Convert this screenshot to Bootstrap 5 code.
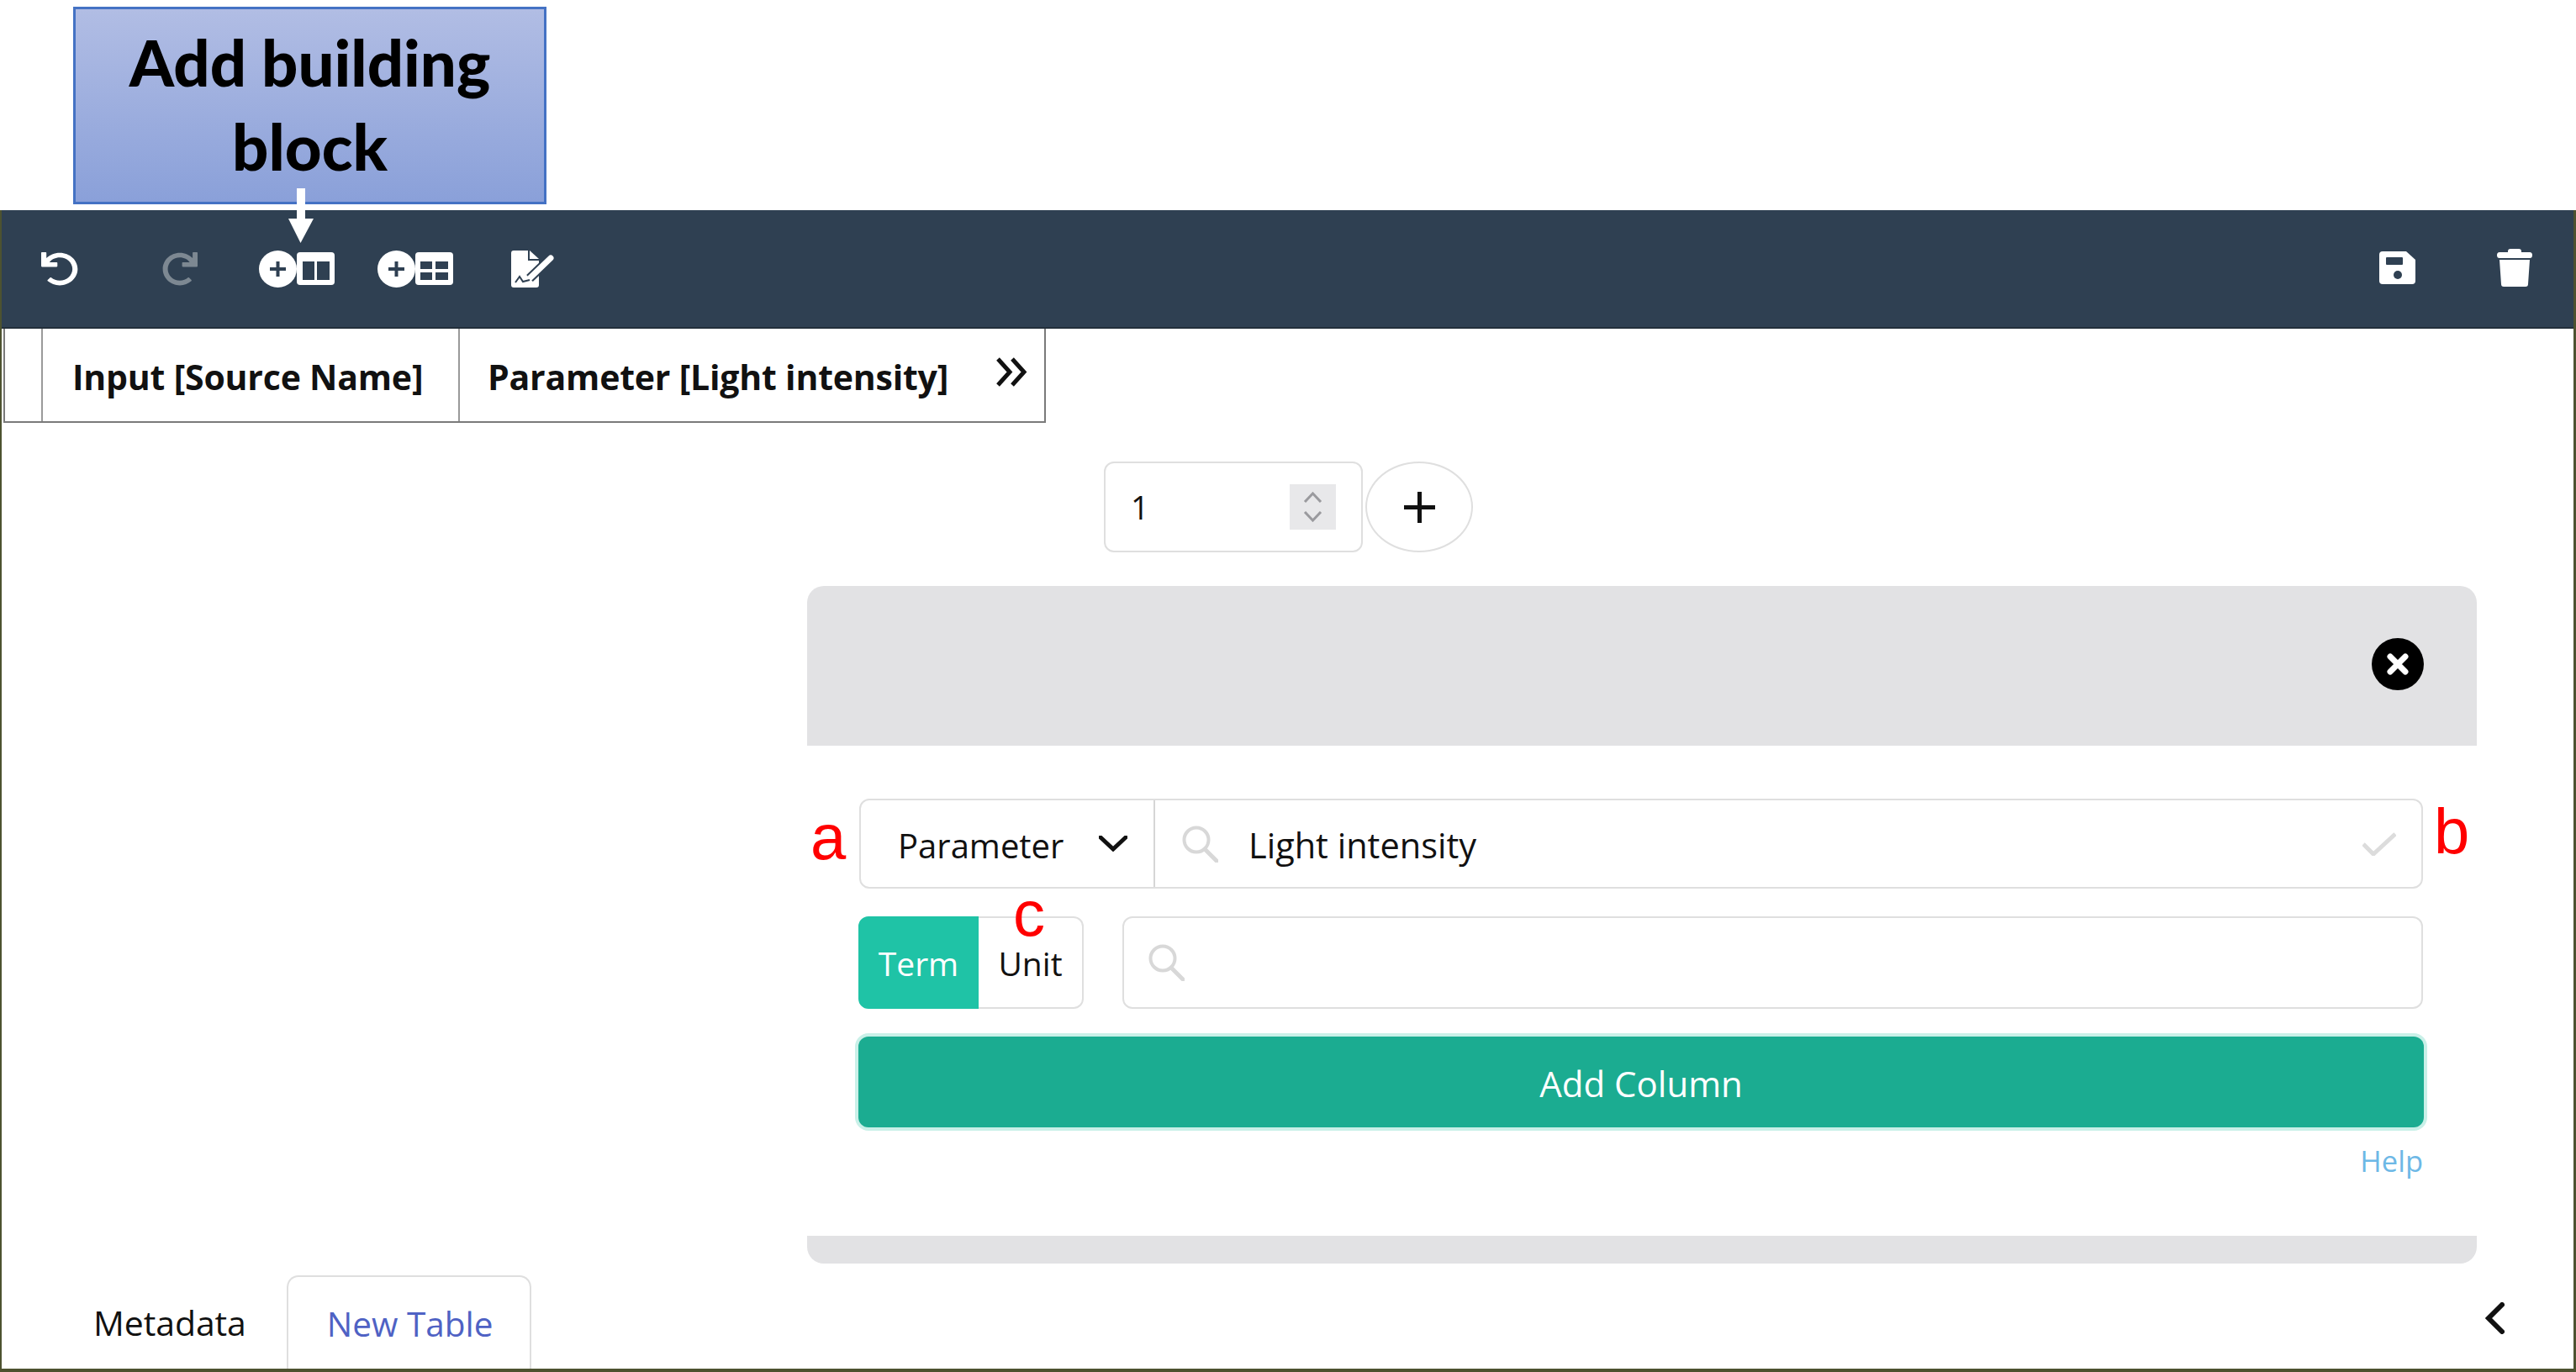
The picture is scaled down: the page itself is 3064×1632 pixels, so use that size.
<!DOCTYPE html>
<html lang="en">
<head>
<meta charset="utf-8">
<title>Building block</title>
<link href="https://cdn.jsdelivr.net/npm/bootstrap@5.3.0/dist/css/bootstrap.min.css" rel="stylesheet">
<style>
html,body{margin:0;background:#fff}
body{width:3064px;height:1632px;overflow:hidden;font-family:"Open Sans","Noto Sans",sans-serif;position:relative;color:#222}
.top-zone{height:250px;padding:8px 0 0 87px}
.callout{width:563px;height:235px;border:3px solid #4472c4;background:linear-gradient(#b1bde4,#8aa0d9);color:#000;font-family:Lato,sans-serif;font-weight:900;font-size:76px;line-height:100px;text-align:center;padding-top:13px}
.down-arrow{position:absolute;left:343px;top:224px;z-index:5}
.app-frame{height:1382px;border-left:2px solid #4d5230;border-right:3px solid #4d5230;border-bottom:4px solid #4d5230;display:flex;flex-direction:column}
.tool-bar{height:141px;background:#2f4052;border-bottom:2px solid #232f3b;padding:0;flex:none;position:relative;display:block}
.tool-bar svg{position:absolute;display:block}
.grid-head{display:flex;align-items:center;height:112px;width:1240px;margin-left:2px;border:2px solid #7a7a7a;border-top:0;flex:none;font-weight:700;font-size:41px;letter-spacing:-.2px;color:#111}
.grid-head>div{height:100%;display:flex;align-items:center;border-right:2px solid #9a9a9a;white-space:nowrap;padding-top:6px}
.cell-idx{width:45px}
.cell-a{width:496px;padding-left:35px}
.cell-b{flex:1;padding-left:33px;border-right:0!important;position:relative}
.cell-b svg{position:absolute;right:20px;top:34px}
.stepper-row{margin:46px 0 0 1311px;height:108px;flex:none;display:flex;gap:3px}
.step-box{width:308px;border:2px solid #dfdfdf;border-radius:12px;display:flex;align-items:center;padding:0 30px 0 30px}
.step-box input{border:0;outline:0;font-size:38px;width:100%;padding:0;background:none;color:#111;box-shadow:none}
.spin{width:55px;height:54px;flex:none;background:#e8e8ea;display:flex;flex-direction:column;align-items:center;justify-content:center;gap:10px}
.step-plus{width:128px;border:2px solid #dfdfdf;border-radius:50%;background:#fff;padding:0;display:flex;align-items:center;justify-content:center}
.bb-panel{margin:40px 0 0 958px;width:1986px;flex:none;position:relative}
.bb-head{height:190px;background:#e2e2e4;border-radius:20px 20px 0 0;display:flex;align-items:center;justify-content:flex-end;padding:0 63px 4px 0;margin-bottom:0}
.bb-foot{height:33px;background:#e2e2e4;border-radius:0 0 20px 20px}
.bb-body{height:583px;padding:63px 64px 0 62px;position:relative;background:#fff}
.field-line{height:107px;border:2px solid #dfdfdf;border-radius:12px;display:flex;align-items:center;font-size:40px;color:#111}
.type-pick{width:350px;height:100%;border-right:2px solid #d6d6d6;display:flex;align-items:center;padding-left:44px;justify-content:space-between;padding-right:31px}
.type-pick span{padding-top:4px}
.field-input{border:0;outline:0;background:none;flex:1;font-size:41.500px;color:#111;padding:4px 0 0;min-width:0}
.s-ico{flex:none;margin-left:32px;margin-right:36px}
.row-two .s-ico{margin-left:29px}
.ok-mark{margin-right:30px;flex:none}
.row-two{display:flex;margin-top:33px;gap:46px;height:110px}
.tog{display:flex;width:268px;height:110px;flex:none;margin-left:-1px}
.tog .btn{font-size:39px;padding:0;border-radius:12px;border:2px solid #dfdfdf;line-height:1;color:#111;background:#fff}
.tog .btn.tog-on{background:#1fc3a6;border-color:#1fc3a6;color:#fff;width:143px;border-radius:12px 0 0 12px}
.tog .btn.tog-off{flex:1;border-left:0;border-radius:0 12px 12px 0}
.row-two .field-line{flex:1;height:110px}
.add-btn{display:block;width:1862px;height:108px;margin:33px 0 0 -1px;background:#1bac91;border:0;color:#fff;font-size:42px;border-radius:12px;box-shadow:0 0 0 4px #c9f0e8;padding:2px 0 0}
.add-btn:hover,.add-btn:focus{background:#1bac91;color:#fff}
.help-link{display:block;text-align:right;color:#6db8e6;font-size:34.500px;line-height:1;margin-top:23px;text-decoration:none}
.mark-red{position:absolute;font-family:"Liberation Sans",sans-serif;font-size:76px;line-height:1;color:#f00}
.mark-a{left:4px;top:71px}
.mark-b{left:1935px;top:64px}
.mark-c{left:245px;top:162px}
.tab-strip{margin-top:auto;height:111px;display:flex;align-items:stretch;flex:none}
.tab-item{font-size:40.500px;padding:3px 46px 0;display:flex;align-items:center;color:#111;text-decoration:none}
.tab-first{margin-left:63px;padding-right:48px;font-size:41px;letter-spacing:-.1px}
.tab-on{border:2px solid #dfdfdf;border-bottom:0;border-radius:14px 14px 0 0;color:#4f62c4;background:#fff;padding-right:44px}
.tab-back{margin-left:auto;margin-right:82px;align-self:center;display:flex;margin-top:-10px}
</style>
</head>
<body>
<div class="top-zone">
  <div class="callout">Add building<br>block</div>
</div>
<svg class="down-arrow" width="30" height="65" viewBox="0 0 30 65"><rect x="10" y="0" width="10" height="37" fill="#fff"/><polygon points="0,36 30,36 14.5,65" fill="#fff"/></svg>
<div class="app-frame">
  <nav class="navbar tool-bar">
    <svg style="left:47px;top:50px" width="44" height="40" viewBox="0 0 512 512" preserveAspectRatio="none"><path fill="#fff" d="M212.333 224.333H12c-6.627 0-12-5.373-12-12V12C0 5.373 5.373 0 12 0h48c6.627 0 12 5.373 12 12v78.112C117.773 39.279 184.26 7.47 258.175 8.007c136.906.994 246.448 111.623 246.157 248.532C504.041 393.258 393.12 504 256.333 504c-64.089 0-122.496-24.313-166.51-64.215-5.099-4.622-5.334-12.554-.467-17.42l33.967-33.967c4.474-4.474 11.662-4.717 16.401-.525C170.76 415.336 211.58 432 256.333 432c97.268 0 176-78.716 176-176 0-97.267-78.716-176-176-176-58.496 0-110.28 28.476-142.274 72.333h98.274c6.627 0 12 5.373 12 12v48c0 6.627-5.373 12-12 12z"/></svg>
    <svg style="left:191px;top:50px" width="42" height="40" viewBox="0 0 512 512" preserveAspectRatio="none"><g transform="translate(512 0) scale(-1 1)"><path fill="#7d8892" d="M212.333 224.333H12c-6.627 0-12-5.373-12-12V12C0 5.373 5.373 0 12 0h48c6.627 0 12 5.373 12 12v78.112C117.773 39.279 184.26 7.47 258.175 8.007c136.906.994 246.448 111.623 246.157 248.532C504.041 393.258 393.12 504 256.333 504c-64.089 0-122.496-24.313-166.51-64.215-5.099-4.622-5.334-12.554-.467-17.42l33.967-33.967c4.474-4.474 11.662-4.717 16.401-.525C170.76 415.336 211.58 432 256.333 432c97.268 0 176-78.716 176-176 0-97.267-78.716-176-176-176-58.496 0-110.28 28.476-142.274 72.333h98.274c6.627 0 12 5.373 12 12v48c0 6.627-5.373 12-12 12z"/></g></svg>
    <svg style="left:306px;top:48px" width="90" height="44" viewBox="0 0 90 44"><ellipse cx="22.5" cy="22" rx="22.5" ry="22" fill="#fff"/><path d="M13 22H32M22.5 13V31" stroke="#2f4052" stroke-width="4"/><rect x="45" y="2" width="45" height="39" rx="4" fill="#fff"/><rect x="52" y="13" width="14" height="22" fill="#2f4052"/><rect x="69" y="13" width="15" height="22" fill="#2f4052"/></svg>
    <svg style="left:447px;top:48px" width="90" height="44" viewBox="0 0 90 44"><ellipse cx="22.5" cy="22" rx="22.5" ry="22" fill="#fff"/><path d="M13 22H32M22.5 13V31" stroke="#2f4052" stroke-width="4"/><rect x="45" y="2" width="45" height="39" rx="4" fill="#fff"/><rect x="51" y="13" width="14" height="9" fill="#2f4052"/><rect x="69" y="13" width="15" height="9" fill="#2f4052"/><rect x="51" y="26" width="14" height="9" fill="#2f4052"/><rect x="69" y="26" width="15" height="9" fill="#2f4052"/></svg>
    <svg style="left:606px;top:48px" width="54" height="44" viewBox="0 0 54 44"><path fill="#fff" d="M0 3Q0 0 3 0H20V12H33V41Q33 44 30 44H3Q0 44 0 41Z"/><path fill="#fff" d="M22 0 33 10H22Z"/><path d="M22 33 47 9" stroke="#2f4052" stroke-width="11"/><path d="M23 32 47 9" stroke="#fff" stroke-width="7" stroke-linecap="round"/><path d="M5 38 10 31 14 37 22 35" fill="none" stroke="#2f4052" stroke-width="2"/></svg>
    <svg style="left:2828px;top:49px" width="43" height="39" viewBox="0 0 43 39"><path fill="#fff" d="M4 0H32L43 10V35Q43 39 39 39H4Q0 39 0 35V4Q0 0 4 0Z"/><rect x="8" y="7" width="20" height="9" rx="1" fill="#2f4052"/><circle cx="22" cy="28" r="5" fill="#2f4052"/></svg>
    <svg style="left:2968px;top:46px" width="42" height="45" viewBox="0 0 42 45"><path fill="#fff" d="M13 3Q13 0 16 0H26Q29 0 29 3V4H39Q42 4 42 7.500Q42 11 39 11H3Q0 11 0 7.500Q0 4 3 4H13Z"/><path fill="#fff" d="M3 13H39L37 42Q37 45 34 45H8Q5 45 5 42Z"/></svg>
  </nav>
  <div class="grid-head">
    <div class="cell-idx"></div>
    <div class="cell-a">Input [Source Name]</div>
    <div class="cell-b">Parameter [Light intensity]<svg width="38" height="35" viewBox="0 0 38 35"><path d="M3 2 17 17.500 3 33M20 2 34 17.500 20 33" fill="none" stroke="#111" stroke-width="5"/></svg></div>
  </div>
  <div class="stepper-row">
    <div class="step-box">
      <input type="text" value="1" aria-label="Rows">
      <div class="spin">
        <svg width="23" height="13" viewBox="0 0 23 13"><path d="M2 12 11.500 2 21 12" fill="none" stroke="#9a9a9e" stroke-width="3"/></svg>
        <svg width="23" height="13" viewBox="0 0 23 13"><path d="M2 1 11.500 11 21 1" fill="none" stroke="#9a9a9e" stroke-width="3"/></svg>
      </div>
    </div>
    <button class="btn step-plus" type="button" aria-label="Add"><svg width="37" height="37" viewBox="0 0 37 37"><path d="M0 18.500H37M18.500 0V37" stroke="#111" stroke-width="5"/></svg></button>
  </div>
  <div class="bb-panel">
    <div class="bb-head">
      <svg width="62" height="62" viewBox="0 0 62 62"><circle cx="31" cy="31" r="31" fill="#000"/><path d="M22 22 40 40M40 22 22 40" stroke="#fff" stroke-width="7" stroke-linecap="round"/></svg>
    </div>
    <div class="bb-body">
      <div class="field-line">
        <div class="type-pick"><span>Parameter</span><svg width="34" height="19" viewBox="0 0 34 19"><path d="M2 2 17 16 32 2" fill="none" stroke="#111" stroke-width="5" stroke-linecap="round"/></svg></div>
        <svg class="s-ico" width="43" height="44" viewBox="0 0 43 44"><circle cx="17" cy="17" r="14.500" fill="none" stroke="#d8d8d8" stroke-width="4"/><path d="M27 28 41 42" stroke="#d8d8d8" stroke-width="5" stroke-linecap="round"/></svg>
        <input class="field-input" type="text" value="Light intensity" aria-label="Column type">
        <svg class="ok-mark" width="40" height="28" viewBox="0 0 40 28"><path d="M1 14 13 26 39 2" fill="none" stroke="#dcdcdc" stroke-width="5"/></svg>
      </div>
      <div class="row-two">
        <div class="tog">
          <button class="btn tog-on" type="button">Term</button>
          <button class="btn tog-off" type="button">Unit</button>
        </div>
        <div class="field-line">
          <svg class="s-ico" width="43" height="44" viewBox="0 0 43 44"><circle cx="17" cy="17" r="14.500" fill="none" stroke="#d8d8d8" stroke-width="4"/><path d="M27 28 41 42" stroke="#d8d8d8" stroke-width="5" stroke-linecap="round"/></svg>
          <input class="field-input" type="text" aria-label="Term">
        </div>
      </div>
      <button class="btn add-btn" type="button">Add Column</button>
      <a class="help-link" href="#">Help</a>
      <span class="mark-red mark-a">a</span>
      <span class="mark-red mark-b">b</span>
      <span class="mark-red mark-c">c</span>
    </div>
    <div class="bb-foot"></div>
  </div>
  <div class="tab-strip">
    <a class="tab-item tab-first" href="#">Metadata</a>
    <a class="tab-item tab-on" href="#">New Table</a>
    <span class="tab-back"><svg width="23" height="38" viewBox="0 0 23 38"><path d="M20 3 4 19 20 35" fill="none" stroke="#111" stroke-width="6" stroke-linecap="round"/></svg></span>
  </div>
</div>
<script src="https://cdn.jsdelivr.net/npm/bootstrap@5.3.0/dist/js/bootstrap.bundle.min.js"></script>
</body>
</html>
